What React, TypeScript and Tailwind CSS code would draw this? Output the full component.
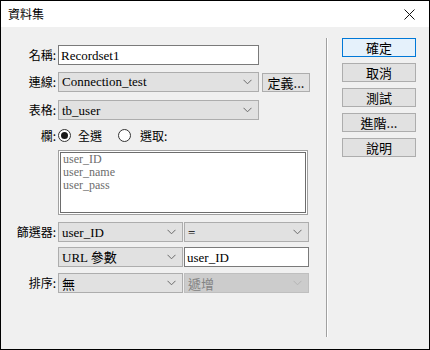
import { ReactNode } from 'react';

const serif = "font-['Liberation_Serif','Noto_Sans_CJK_TC',serif]";
const sans = "font-['Noto_Sans_CJK_TC','Liberation_Sans',sans-serif]";

function Chevron({ dim }: { dim?: boolean }) {
  return (
    <svg width="9" height="6" viewBox="0 0 9 6" className="shrink-0">
      <path d="M0.5 0.8 L4.5 4.8 L8.5 0.8" fill="none" stroke={dim ? '#b4b4b4' : '#6a6a6a'} strokeWidth="1" />
    </svg>
  );
}

function Select({ value, width, disabled, cjk }: { value: string; width: string; disabled?: boolean; cjk?: boolean }) {
  return (
    <div
      className={`${width} h-[20px] flex items-center justify-between pl-[3px] pr-[6px] border ${
        disabled ? 'bg-[#cccccc] border-[#bfbfbf] text-[#838383]' : 'bg-[#e1e1e1] border-[#adadad] text-black'
      }`}
    >
      <span className={`${cjk ? sans : serif} text-[13px] leading-none whitespace-nowrap`}>{value}</span>
      <Chevron dim={disabled} />
    </div>
  );
}

function TextBox({ value, width }: { value: string; width: string }) {
  return (
    <div className={`${width} h-[20px] flex items-center pl-[2px] bg-white border border-[#7a7a7a]`}>
      <span className={`${serif} text-[13px] leading-none`}>{value}</span>
    </div>
  );
}

function Row({ label, children, className = '' }: { label?: string; children: ReactNode; className?: string }) {
  return (
    <div className={`flex items-center ${className}`}>
      <div className={`w-[57px] pr-[2px] text-right text-[12px] leading-none ${sans}`}>{label}</div>
      {children}
    </div>
  );
}

function Radio({ checked }: { checked?: boolean }) {
  return (
    <span className="w-[13px] h-[13px] rounded-full border border-[#333333] bg-white flex items-center justify-center">
      {checked && <span className="w-[7px] h-[7px] rounded-full bg-[#1a1a1a]" />}
    </span>
  );
}

function Btn({ children, primary }: { children: ReactNode; primary?: boolean }) {
  return (
    <div
      className={`w-[74px] h-[19px] flex items-center justify-center text-[13px] leading-none ${sans} border ${
        primary ? 'bg-[#e5f1fb] border-[#0078d7]' : 'bg-[#e1e1e1] border-[#adadad]'
      }`}
    >
      {children}
    </div>
  );
}

export default function App() {
  return (
    <div className="w-[430px] h-[350px] border border-black bg-[#f0f0f0] flex flex-col text-black">
      <div className="h-[26px] bg-white flex items-center justify-between pl-[7px] pr-[14px]">
        <span className={`${sans} text-[12px]`}>資料集</span>
        <svg width="11" height="11" viewBox="0 0 11 11">
          <path d="M0.5 0.5 L10.5 10.5 M10.5 0.5 L0.5 10.5" stroke="#111" strokeWidth="1" />
        </svg>
      </div>
      <div className="flex-1 flex">
        <div className="w-[325px] pt-[18px] flex flex-col">
          <Row label="名稱:">
            <TextBox value="Recordset1" width="w-[201px]" />
          </Row>
          <Row label="連線:" className="mt-[6px]">
            <Select value="Connection_test" width="w-[201px]" />
            <div className={`ml-[3px] mt-[2px] w-[48px] h-[19px] flex items-center justify-center bg-[#e1e1e1] border border-[#adadad] text-[13px] leading-none ${sans}`}>
              定義...
            </div>
          </Row>
          <Row label="表格:" className="mt-[8px]">
            <Select value="tb_user" width="w-[201px]" />
          </Row>
          <Row label="欄:" className="mt-[8px] h-[15px]">
            <div className={`flex items-center text-[12px] leading-none ${sans}`}>
              <Radio checked />
              <span className="ml-[7px]">全選</span>
              <span className="ml-[16px]"><Radio /></span>
              <span className="ml-[9px]">選取:</span>
            </div>
          </Row>
          <Row className="mt-[7px]">
            <div className="w-[250px] h-[65px] border border-[#a0a0a0] bg-white p-[1px]">
              <div className={`h-full border border-[#6d6d6d] pl-[2px] text-[12px] leading-[13px] text-[#6d6d6d] ${serif}`}>
                <div>user_ID</div>
                <div>user_name</div>
                <div>user_pass</div>
              </div>
            </div>
          </Row>
          <Row label="篩選器:" className="mt-[7px]">
            <Select value="user_ID" width="w-[125px]" />
            <div className="ml-[1px]">
              <Select value="=" width="w-[125px]" />
            </div>
          </Row>
          <Row className="mt-[5px]">
            <Select value="URL 參數" width="w-[125px]" />
            <div className="ml-[1px]">
              <TextBox value="user_ID" width="w-[125px]" />
            </div>
          </Row>
          <Row label="排序:" className="mt-[6px]">
            <Select value="無" width="w-[125px]" cjk />
            <div className="ml-[1px]">
              <Select value="遞增" width="w-[125px]" disabled cjk />
            </div>
          </Row>
        </div>
        <div className="mt-[11px] mb-[12px] w-[2px] flex">
          <div className="w-[1px] bg-[#a0a0a0]" />
          <div className="w-[1px] bg-white" />
        </div>
        <div className="pl-[14px] pt-[11px] flex flex-col gap-[6px]">
          <Btn primary>確定</Btn>
          <Btn>取消</Btn>
          <Btn>測試</Btn>
          <Btn>進階...</Btn>
          <Btn>說明</Btn>
        </div>
      </div>
    </div>
  );
}
